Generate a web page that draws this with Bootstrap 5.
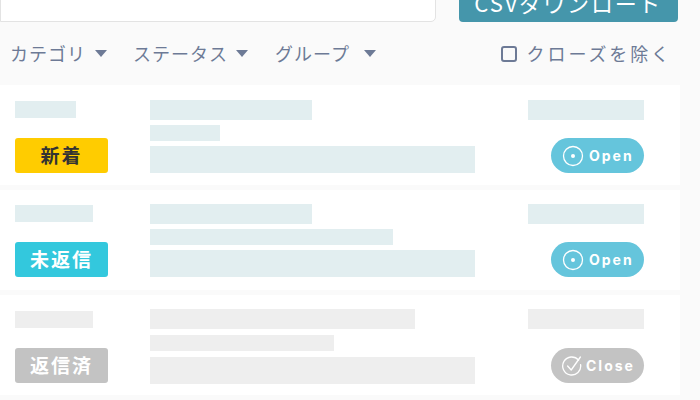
<!DOCTYPE html>
<html lang="ja">
<head>
  <meta charset="UTF-8" />
  <meta name="viewport" content="width=device-width, initial-scale=1" />
  <title>問い合わせ一覧</title>
  <link href="https://cdn.jsdelivr.net/npm/bootstrap@5.3.3/dist/css/bootstrap.min.css" rel="stylesheet" />
  <style>
    body {
      background-color: #fafafa;
      font-family: "Noto Sans CJK JP", "Noto Sans", sans-serif;
      overflow: hidden;
    }
    .top-bar {
      margin-top: -16px;
      height: 38px;
      padding-right: 22px;
    }
    .search-box {
      width: 436px;
      height: 100%;
      border-radius: 0 0 5px 0;
      border-color: #e3e3e3;
    }
    .csv-btn {
      margin-left: 23px;
      width: 219px;
      height: 38px;
      padding: 0 0 2px;
      background-color: #4596ab;
      color: #fff;
      font-size: 22px;
      line-height: 36px;
      letter-spacing: 1.9px;
      border: 0;
      border-radius: 4px;
      white-space: nowrap;
    }
    .filter-bar {
      height: 63px;
      padding: 0 28px 0 10px;
      color: #6d7a96;
      font-size: 18px;
      line-height: 24px;
      letter-spacing: 1px;
    }
    .filter-name { margin-top: -2px; }
    .filter-tri {
      width: 0;
      height: 0;
      margin-left: 9px;
      border-left: 6.5px solid transparent;
      border-right: 6.5px solid transparent;
      border-top: 7px solid #6d7a96;
    }
    .filter-item { margin-right: 26px; }
    .filter-item.mid .filter-tri { margin-left: 8px; }
    .filter-item.mid { margin-right: 27px; }
    .filter-item.wide .filter-tri { margin-left: 14px; }
    .close-check {
      width: 16px;
      height: 16px;
      margin-right: 10px;
      border: 2px solid #6d7a96;
      border-radius: 3px;
    }
    .close-label {
      font-size: 18px;
      letter-spacing: 2.9px;
    }
    .list-rows { width: 680px; gap: 5px; }
    .entry-row {
      height: 100px;
      background-color: #fff;
      padding: 15px 36px 12px 15px;
    }
    .entry-row.r2 { padding-top: 14px; padding-bottom: 13px; }
    .entry-row.r3 { padding-top: 14px; padding-bottom: 11px; }
    .col-left { width: 135px; padding-top: 1px; }
    .r2 .col-left { padding-top: 1px; padding-bottom: 0; }
    .r3 .col-left { padding-top: 2px; padding-bottom: 1px; }
    .col-mid { width: 378px; gap: 5px; }
    .r3 .col-mid { gap: 6px; }
    .col-end { width: 116px; }
    .r3 .col-end { padding-bottom: 1px; }
    .ph { background-color: #e2eef0; }
    .r3 .ph { background-color: #eeeeee; }
    .ph-a { height: 17px; }
    .ph-b { height: 20px; }
    .ph-c { height: 16px; }
    .ph-d { height: 27px; width: 325px; }
    .w-61 { width: 61px; }
    .w-78 { width: 78px; }
    .w-162 { width: 162px; }
    .w-265 { width: 265px; }
    .w-70 { width: 70px; }
    .w-243 { width: 243px; }
    .w-184 { width: 184px; }
    .state-tag {
      width: 93px;
      height: 35px;
      border-radius: 3px;
      font-size: 19px;
      font-weight: 700;
      letter-spacing: 2px;
      color: #fff;
    }
    .tag-new { background-color: #ffcc00; color: #333; }
    .tag-wait { background-color: #33c8dd; }
    .tag-done { background-color: #c3c3c3; }
    .state-pill {
      width: 93px;
      height: 35px;
      color: #fff;
      font-family: "Inter", "Liberation Sans", sans-serif;
      font-size: 14px;
      font-weight: 700;
      letter-spacing: 2px;
    }
    .pill-open { background-color: #65c5dc; gap: 5px; padding-left: 11px; }
    .pill-close { background-color: #c3c3c3; gap: 3px; padding-left: 10px; }
  </style>
</head>
<body>
  <!-- search + csv -->
  <div class="top-bar d-flex">
    <input type="text" class="form-control search-box flex-shrink-0" />
    <button class="btn csv-btn flex-shrink-0" type="button">CSVダウンロード</button>
  </div>

  <!-- filters -->
  <div class="filter-bar d-flex align-items-center">
    <div class="filter-item d-flex align-items-center"><span class="filter-name">カテゴリ</span><span class="filter-tri"></span></div>
    <div class="filter-item mid d-flex align-items-center"><span class="filter-name">ステータス</span><span class="filter-tri"></span></div>
    <div class="filter-item wide d-flex align-items-center"><span class="filter-name">グループ</span><span class="filter-tri"></span></div>
    <div class="ms-auto d-flex align-items-center">
      <span class="close-check"></span><span class="close-label filter-name">クローズを除く</span>
    </div>
  </div>

  <!-- rows -->
  <div class="list-rows d-flex flex-column">
    <div class="entry-row d-flex">
      <div class="col-left d-flex flex-column justify-content-between">
        <div class="ph ph-a w-61"></div>
        <div class="state-tag tag-new d-flex align-items-center justify-content-center">新着</div>
      </div>
      <div class="col-mid d-flex flex-column">
        <div class="ph ph-b w-162"></div>
        <div class="ph ph-c w-70"></div>
        <div class="ph ph-d"></div>
      </div>
      <div class="col-end d-flex flex-column justify-content-between align-items-end">
        <div class="ph ph-b w-100"></div>
        <div class="state-pill pill-open rounded-pill d-flex align-items-center">
          <svg width="22" height="22" viewBox="0 0 22 22" fill="none"><circle cx="11" cy="11" r="9.5" stroke="#fff" stroke-width="1.3"/><circle cx="11" cy="11" r="2" fill="#fff"/></svg>
          <span>Open</span>
        </div>
      </div>
    </div>

    <div class="entry-row r2 d-flex">
      <div class="col-left d-flex flex-column justify-content-between">
        <div class="ph ph-a w-78"></div>
        <div class="state-tag tag-wait d-flex align-items-center justify-content-center">未返信</div>
      </div>
      <div class="col-mid d-flex flex-column">
        <div class="ph ph-b w-162"></div>
        <div class="ph ph-c w-243"></div>
        <div class="ph ph-d"></div>
      </div>
      <div class="col-end d-flex flex-column justify-content-between align-items-end">
        <div class="ph ph-b w-100"></div>
        <div class="state-pill pill-open rounded-pill d-flex align-items-center">
          <svg width="22" height="22" viewBox="0 0 22 22" fill="none"><circle cx="11" cy="11" r="9.5" stroke="#fff" stroke-width="1.3"/><circle cx="11" cy="11" r="2" fill="#fff"/></svg>
          <span>Open</span>
        </div>
      </div>
    </div>

    <div class="entry-row r3 d-flex">
      <div class="col-left d-flex flex-column justify-content-between">
        <div class="ph ph-a w-78"></div>
        <div class="state-tag tag-done d-flex align-items-center justify-content-center">返信済</div>
      </div>
      <div class="col-mid d-flex flex-column">
        <div class="ph ph-b w-265"></div>
        <div class="ph ph-c w-184"></div>
        <div class="ph ph-d"></div>
      </div>
      <div class="col-end d-flex flex-column justify-content-between align-items-end">
        <div class="ph ph-b w-100"></div>
        <div class="state-pill pill-close rounded-pill d-flex align-items-center">
          <svg width="22" height="22" viewBox="0 0 22 22" fill="none"><path d="M17.6 5.2A9 9 0 1 0 19.6 9.6" stroke="#fff" stroke-width="1.3" stroke-linecap="round"/><path d="M6.6 11l3.6 4L19.4 2" stroke="#fff" stroke-width="1.3" stroke-linecap="round" stroke-linejoin="round"/></svg>
          <span>Close</span>
        </div>
      </div>
    </div>
  </div>

  <script src="https://cdn.jsdelivr.net/npm/bootstrap@5.3.3/dist/js/bootstrap.bundle.min.js"></script>
</body>
</html>
